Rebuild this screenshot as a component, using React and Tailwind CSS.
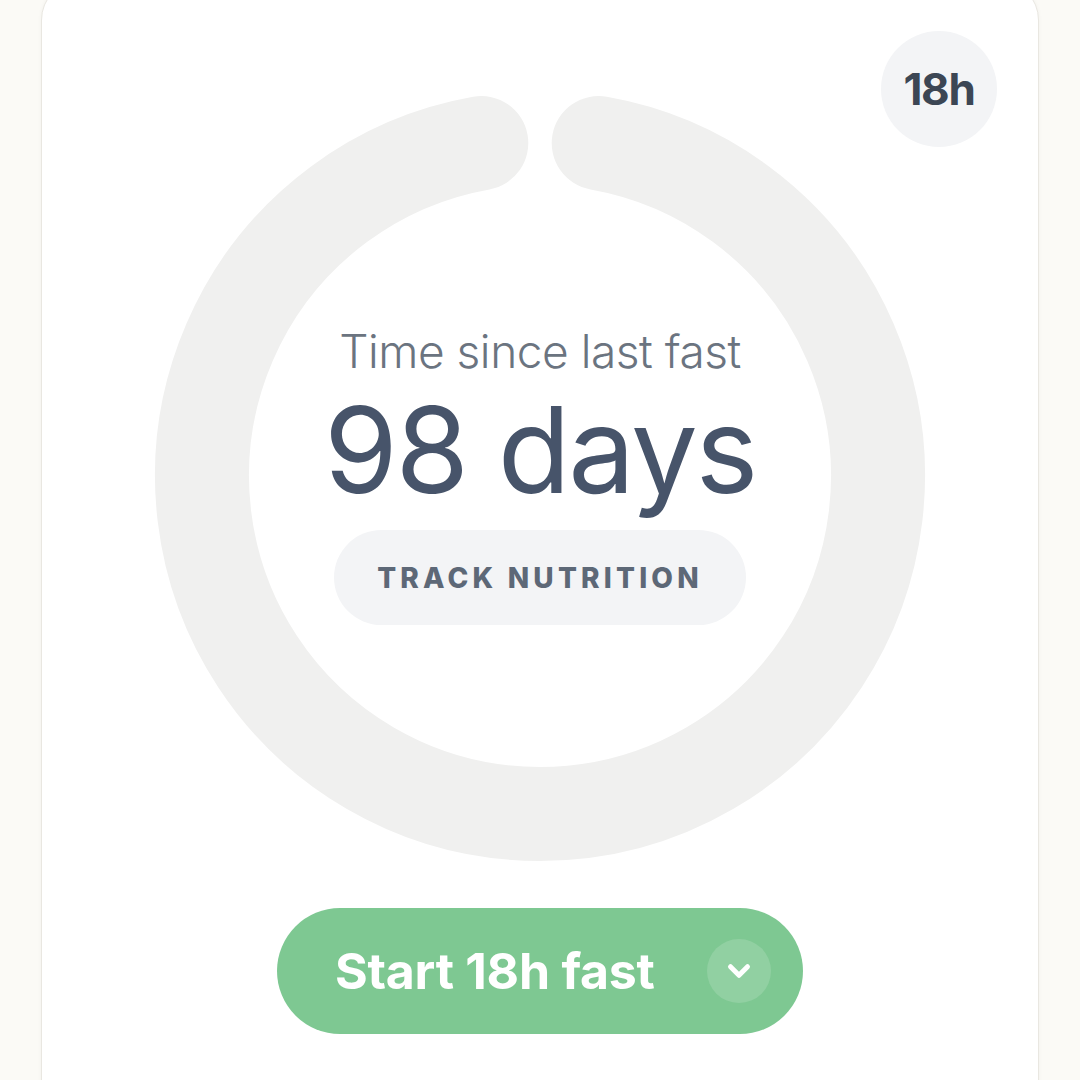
import React from "react";

function Ring() {
  return (
    <svg width="772" height="772" viewBox="0 0 772 772" className="col-start-1 row-start-1">
      <path
        d="M 444.7 53.1 A 338 338 0 1 1 327.3 53.1"
        fill="none"
        stroke="#f0f0ef"
        strokeWidth="94"
        strokeLinecap="round"
      />
    </svg>
  );
}

export default function App() {
  return (
    <div
      className="min-h-[1080px] h-[1080px] overflow-hidden bg-[#fbfaf6] px-[41px]"
      style={{ fontFamily: "Inter, 'Noto Sans', sans-serif" }}
    >
      <div className="relative mt-[-20px] h-[1200px] rounded-[40px] border border-[#e9e7e1] bg-white shadow-[0_0_4px_rgba(0,0,0,0.04)]">
        <div className="absolute right-[41px] top-[50px] flex h-[116px] w-[116px] items-center justify-center rounded-full bg-[#f3f4f6] text-[44px] font-bold tracking-[-0.03em] text-[#3c4654]">
          18h
        </div>
        <div className="flex flex-col items-center pt-[109px]">
          <div className="grid place-items-center">
            <Ring />
            <div className="col-start-1 row-start-1 flex flex-col items-center pt-[1px]">
              <div className="text-[46px] font-light leading-none tracking-[-0.01em] text-[#6b7480]">
                Time since last fast
              </div>
              <div className="mt-[17px] text-[119px] font-normal leading-none tracking-[-0.02em] text-[#47546a]">
                98 days
              </div>
              <div className="mt-[20px] flex h-[95px] w-[412px] items-center justify-center rounded-full bg-[#f3f4f6] text-[28px] font-extrabold tracking-[0.15em] text-[#5d6877]">
                TRACK NUTRITION
              </div>
            </div>
          </div>
          <button className="mt-[46px] flex h-[126px] w-[526px] items-center justify-between rounded-full bg-[#7ec892] pl-[58px] pr-[32px] text-white">
            <span className="text-[50px] font-bold tracking-[-0.005em]">Start 18h fast</span>
            <span className="flex h-[64px] w-[64px] items-center justify-center rounded-full bg-white/15">
              <svg width="34" height="34" viewBox="0 0 24 24" fill="none" stroke="white" strokeWidth="3.5" strokeLinecap="round" strokeLinejoin="round">
                <path d="M6 9l6 6 6-6" />
              </svg>
            </span>
          </button>
        </div>
      </div>
    </div>
  );
}
